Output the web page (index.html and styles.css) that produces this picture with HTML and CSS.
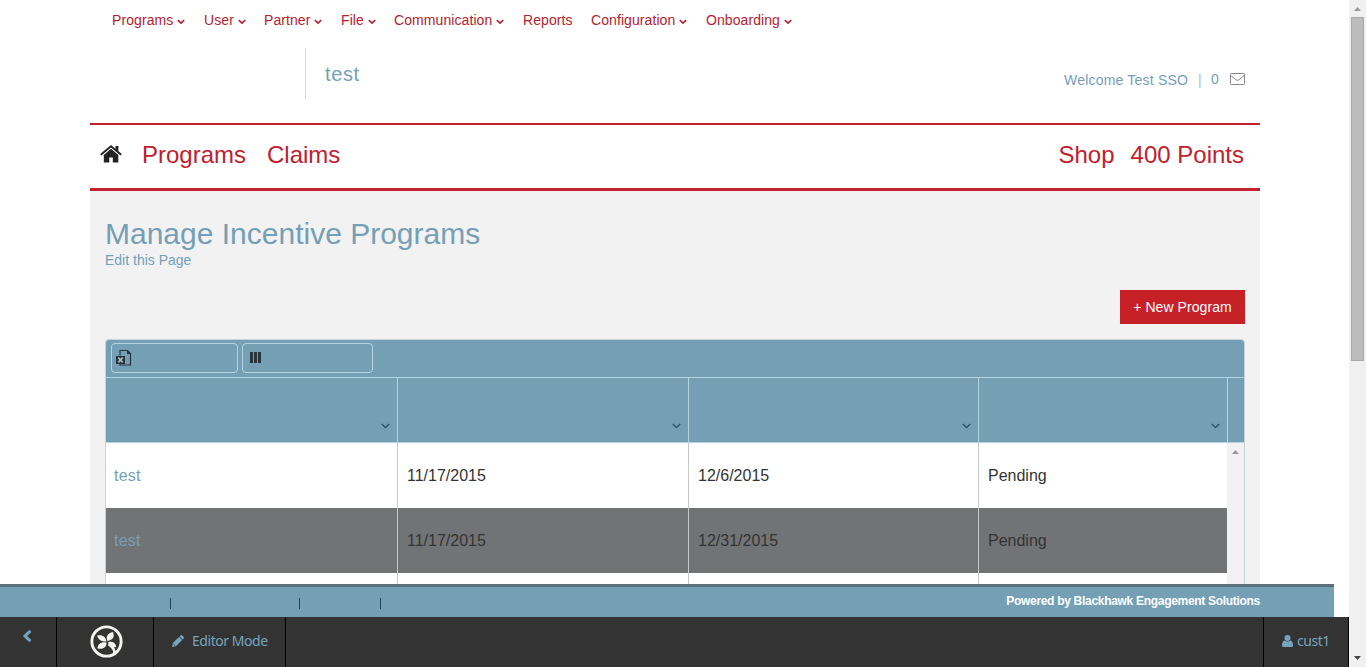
FILE: index.html
```html
<!DOCTYPE html>
<html lang="en">
<head>
<meta charset="utf-8">
<title>Manage Incentive Programs</title>
<link rel="stylesheet" href="styles.css">
</head>
<body>
<svg class="defs" aria-hidden="true">
  <symbol id="chev" viewBox="0 0 8 6"><path d="M.8 1.200l3.200 3 3.200-3" fill="none" stroke="currentColor" stroke-width="1.700"/></symbol>
  <symbol id="sort" viewBox="0 0 9 6"><path d="M.8 1l3.700 3.500L8.200 1" fill="none" stroke="currentColor" stroke-width="1.400"/></symbol>
</svg>
<div class="screen">
  <div class="view">
    <div class="scroll">
      <nav class="admin">
        <a class="w92">Programs<svg><use href="#chev"/></svg></a>
        <a class="w60">User<svg><use href="#chev"/></svg></a>
        <a class="w77">Partner<svg><use href="#chev"/></svg></a>
        <a class="w53">File<svg><use href="#chev"/></svg></a>
        <a class="w129">Communication<svg><use href="#chev"/></svg></a>
        <a class="w68">Reports</a>
        <a class="w115">Configuration<svg><use href="#chev"/></svg></a>
        <a>Onboarding<svg><use href="#chev"/></svg></a>
      </nav>
      <header class="brand">
        <div class="brand-name">test</div>
        <div class="welcome"><span class="hello">Welcome Test SSO</span><span class="bar">|</span><span class="count">0</span>
          <svg class="mail" viewBox="0 0 15 12"><rect x=".5" y=".5" width="14" height="11" rx=".8" fill="none" stroke="currentColor"/><path d="M.8 2.500l5 4.200q1.700 1.300 3.400 0l5-4.200" fill="none" stroke="currentColor"/></svg>
        </div>
      </header>
      <nav class="main">
        <svg class="home" viewBox="0 0 22 18"><path d="M11 3.800L18.300 10v7.500h-5.500v-5H9.300v5H3.800V10z" fill="#222"/><path d="M.8 9.800L11 1.300l10.200 8.500" fill="none" stroke="#222" stroke-width="1.900"/><path d="M15.500 1h2.900v6l-2.900-2.500z" fill="#222"/></svg>
        <a class="nav-programs">Programs</a><a>Claims</a>
        <a class="shop">Shop</a><a>400 Points</a>
      </nav>
      <main class="content">
        <h1>Manage Incentive Programs</h1>
        <a class="edit">Edit this Page</a>
        <div class="actions"><button class="new">+ New Program</button></div>
        <section class="grid">
          <div class="tools">
            <div class="tool excel"><svg viewBox="0 0 16 17"><path d="M4 6.500V1.500h7.500l3 3v11.500H4v-2" fill="none" stroke="#28343c" stroke-width="1.200"/><path d="M11 1v4h4z" fill="#28343c"/><path d="M0 7h9v8H0z" fill="#28343c"/><path d="M2.300 8.600l4.400 4.800m0-4.800l-4.400 4.800" stroke="#a9bcc6" stroke-width="1.700"/></svg></div>
            <div class="tool columns"><svg viewBox="0 0 11 11"><path d="M0 0h3v11H0zM4 0h3v11H4zM8 0h3v11H8z" fill="#28343c"/></svg></div>
          </div>
          <div class="row head">
            <div><svg><use href="#sort"/></svg></div><div><svg><use href="#sort"/></svg></div><div><svg><use href="#sort"/></svg></div><div><svg><use href="#sort"/></svg></div><div></div>
          </div>
          <div class="body">
            <div class="rows">
              <div class="row"><div class="link">test</div><div>11/17/2015</div><div>12/6/2015</div><div>Pending</div></div>
              <div class="row alt"><div class="link">test</div><div>11/17/2015</div><div>12/31/2015</div><div>Pending</div></div>
              <div class="row"><div></div><div></div><div></div><div></div></div>
            </div>
            <div class="track"><svg viewBox="0 0 7 4"><path d="M0 4L3.500 0 7 4z" fill="#999"/></svg></div>
          </div>
        </section>
      </main>
    </div>
    <footer class="foot"><span class="sep s1"></span><span class="sep s2"></span><span class="sep s3"></span><span class="powered">Powered by Blackhawk Engagement Solutions</span></footer>
    <div class="dock">
      <div class="back"><svg viewBox="0 0 10 12"><path d="M8.400 .8L3 6l5.400 5.200" fill="none" stroke="currentColor" stroke-width="3"/></svg></div>
      <div class="logo"><svg viewBox="0 0 32 32"><circle cx="16" cy="16" r="14.200" fill="none" stroke="#f4f4f0" stroke-width="2.800"/><g fill="#f4f4f0"><path d="M16 15.800C11.500 16.800 8 14.500 6.800 10.300 11.500 8.800 15 11 16 15.800z"/><path d="M17 15.500C15 11.500 17 7.800 22.300 6.800 24.300 11.300 22 14.700 17 15.500z"/><path d="M16 17C16.300 21.500 12.800 24 7.300 22.800 7.300 18.300 11 16 16 17z"/><path d="M17.500 16.800C21 15.500 24.800 17 25.500 21 21.500 22.500 18.200 20.800 17.500 16.800z"/></g><path d="M18 18.500q7 4.500 5.500 10.500" fill="none" stroke="#f4f4f0" stroke-width="2.500"/></svg></div>
      <div class="editor"><svg viewBox="0 0 12 12"><path d="M0 12l.8-3.900L7 1.900 10.100 5 3.900 11.200zM7.500 1.400L8.600.3q.7-.6 1.400 0L11.700 2q.6.700 0 1.400l-1.100 1.100z" fill="currentColor"/><path d="M1.300 9l1.700 1.700" stroke="#333" stroke-width=".8"/></svg><span>Editor Mode</span></div>
      <div class="user"><svg viewBox="0 0 11 12"><circle cx="5.500" cy="3" r="3" fill="currentColor"/><path d="M0 10.500Q0 5.800 2.500 5.500q3 2 6 0Q11 5.800 11 10.500q0 1.500-1.500 1.500h-8Q0 12 0 10.500z" fill="currentColor"/></svg><span>cust1</span></div>
    </div>
  </div>
  <div class="scrollbar">
    <svg viewBox="0 0 7 4"><path d="M0 4L3.500 0 7 4z" fill="#999"/></svg>
    <div class="thumb"></div>
    <svg class="down" viewBox="0 0 7 4"><path d="M0 0h7L3.500 4z" fill="#444"/></svg>
  </div>
</div>
</body>
</html>
```
FILE: styles.css
```css
* { box-sizing: border-box; }
body { margin: 0; background: #fff; font-family: "Liberation Sans", Arial, sans-serif; overflow: hidden; }
svg { display: block; flex: none; }
.defs { display: none; }
.screen { display: flex; width: 1366px; height: 667px; }
.view { width: 1349px; display: flex; flex-direction: column; }
.scroll { height: 584px; overflow: hidden; padding-left: 90px; }
.scroll > * { width: 1170px; }

.admin { display: flex; height: 48px; padding: 12px 0 0 22px; font-size: 14px; line-height: 16px; letter-spacing: .08px; color: #b52230; white-space: nowrap; }
.admin a { display: flex; gap: 4px; }
.admin svg { width: 8px; height: 6px; margin-top: 7px; }
.w92 { width: 92px; } .w60 { width: 60px; } .w77 { width: 77px; } .w53 { width: 53px; }
.w129 { width: 129px; } .w68 { width: 68px; } .w115 { width: 115px; }

.brand { display: flex; justify-content: space-between; height: 75px; padding: 0 15px 0 215px; color: #759fb5; }
.brand-name { height: 51px; border-left: 1px solid #d9d9d9; padding-left: 19px; font-size: 20px; line-height: 53px; letter-spacing: .6px; }
.welcome { display: flex; padding-top: 24px; font-size: 14px; line-height: 16px; }
.hello { width: 134px; letter-spacing: .2px; }
.bar { width: 13px; color: #a9bccb; }
.count { width: 19px; margin-top: -1px; }
.mail { width: 15px; height: 12px; margin-top: 1px; color: #888; }

.main { display: flex; height: 68px; border-top: 2px solid #c1222f; border-bottom: 3px solid #c1222f; padding: 16px 16px 0 10px; font-size: 24px; line-height: 28px; color: #c1202c; }
.home { width: 22px; height: 18px; margin: 4px 20px 0 0; }
.nav-programs { width: 125px; }
.shop { margin: 0 16px 0 auto; }

.content { height: 600px; padding: 25px 15px 0; background: #f2f2f2; }
h1 { margin: 0; font-size: 30px; line-height: 36px; font-weight: 400; color: #759fb5; white-space: nowrap; }
.edit { display: block; font-size: 14px; line-height: 16px; color: #759fb5; }
.actions { display: flex; justify-content: flex-end; margin-top: 22px; }
.new { width: 125px; height: 34px; padding: 0; border: 0; background: #c62127; color: #fff; font: 14px "Liberation Sans", Arial, sans-serif; letter-spacing: .08px; }

.grid { margin-top: 15px; border: 1px solid #c8d3da; border-radius: 4px; overflow: hidden; background: #759fb5; }
.tools { display: flex; gap: 4px; height: 37px; padding: 3px 0 0 5px; }
.tool { height: 30px; border: 1px solid #b8d3e0; border-radius: 4px; }
.excel { width: 127px; padding: 5px 0 0 4px; }
.excel svg { width: 16px; height: 17px; }
.columns { width: 131px; padding: 8px 0 0 7px; }
.columns svg { width: 11px; height: 11px; }
.row { display: grid; grid-template-columns: 292px 291px 290px 249px 1fr; height: 65px; background: #fff; font-size: 16px; line-height: 65px; color: #333; }
.row > div { padding-left: 9px; border-right: 1px solid #c4c8cb; }
.row > div:first-child { padding-left: 8px; }
.body .row { grid-template-columns: 292px 291px 290px 249px; }
.body .row > div:last-child { border-right: 0; }
.row .link { color: #759fb5; letter-spacing: .2px; }
.row.alt { background: #727375; }
.row.head { height: 66px; background: #759fb5; border-top: 1px solid #b8d3e0; border-bottom: 1px solid #b8d3e0; color: #315468; }
.row.head > div { display: flex; justify-content: flex-end; align-items: flex-end; padding: 0 7px 13px 0; border-color: #b8d3e0; }
.row.head > div:last-child { border: 0; }
.head svg { width: 9px; height: 6px; }
.body { display: flex; background: #f2f2f2; height: 200px; }
.rows { width: 1121px; overflow: hidden; }
.track { padding: 7px 0 0 5px; }
.track svg, .scrollbar svg { width: 7px; height: 4px; }

.foot { width: 1334px; height: 33px; display: flex; border-top: 3px solid #5b6f7d; background: #759fb5; padding-top: 11px; }
.sep { width: 1px; height: 11px; background: #23445a; }
.s1 { margin-left: 170px; } .s2 { margin-left: 128px; } .s3 { margin-left: 80px; }
.powered { margin: -4px 74px 0 auto; color: #fff; font-size: 12px; line-height: 14px; font-weight: 700; letter-spacing: -.3px; white-space: nowrap; }

.dock { display: flex; height: 50px; background: #333; color: #75a5bd; font: 14px/16px "Noto Sans", "Open Sans", sans-serif; letter-spacing: -.45px; border-right: 1px solid #000; }
.dock > div { border-right: 1px solid #000; }
.back { width: 57px; padding: 13px 0 0 22px; }
.back svg { width: 10px; height: 12px; }
.logo { width: 97px; padding: 8px 0 0 33px; }
.logo svg { width: 33px; height: 33px; }
.dock .editor { display: flex; width: 132px; padding: 16px 0 0 18px; gap: 8px; }
.editor svg { width: 12px; height: 12px; margin-top: 2px; }
.dock .user { display: flex; gap: 4px; width: 85px; margin-left: auto; padding: 16px 0 0 18px; border-left: 1px solid #000; border-right: 0; }
.user svg { width: 11px; height: 12px; margin-top: 2px; }

.scrollbar { width: 17px; background: #f0f0f0; display: flex; flex-direction: column; align-items: center; padding: 7px 0 7px; }
.thumb { width: 13px; height: 344px; margin-top: 6px; background: #bcbcbc; border: 1px solid #a8a8a8; }
.scrollbar .down { margin-top: auto; }
```
